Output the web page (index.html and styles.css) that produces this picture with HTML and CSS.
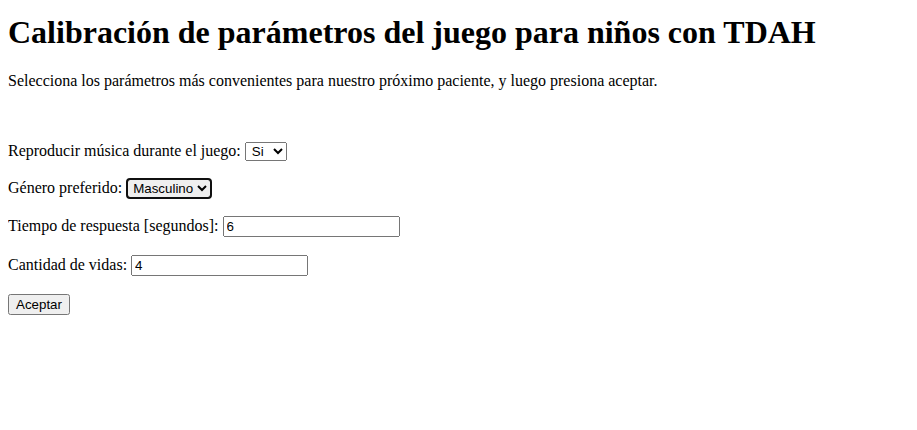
FILE: index.html
```html
<!DOCTYPE html>
<html lang="es">
<head>
<meta charset="utf-8">
<title>Calibración</title>
<link rel="stylesheet" href="styles.css">
</head>
<body>
<h1 class="title">Calibración de parámetros del juego para niños con TDAH</h1>
<p class="intro">Selecciona los parámetros más convenientes para nuestro próximo paciente, y luego presiona aceptar.</p>
<br>
<form class="form">
<p class="row">Reproducir música durante el juego: <select class="ctrl sel"><option>Si</option><option>No</option></select></p>
<p class="row">Género preferido: <select class="ctrl sel focused"><option>Masculino</option><option>Femenino</option></select></p>
<p class="row">Tiempo de respuesta [segundos]: <input class="ctrl text" type="text" value="6"></p>
<p class="row">Cantidad de vidas: <input class="ctrl text" type="text" value="4"></p>
<p class="row"><button class="ctrl btn" type="button">Aceptar</button></p>
</form>
</body>
</html>
```
FILE: styles.css
```css
body {
  margin: 8px;
  font-family: "Liberation Serif", "Times New Roman", serif;
  font-size: 16px;
  color: #000;
  background: #fff;
}
.title {
  font-size: 32px;
  font-weight: bold;
  margin: 6px 0 21px;
}
.intro {
  margin: 16px 0;
}
.row {
  margin: 18px 0;
}
.ctrl {
  font-family: "Liberation Sans", Arial, sans-serif;
  font-size: 13.33px;
}
.sel {
  padding-left: 2px;
}
.focused {
  margin-left: 1px;
  padding-left: 1px;
  outline: 2px solid #101010;
  outline-offset: -1px;
  border-radius: 3px;
}
.text {
  width: 169px;
}
```
